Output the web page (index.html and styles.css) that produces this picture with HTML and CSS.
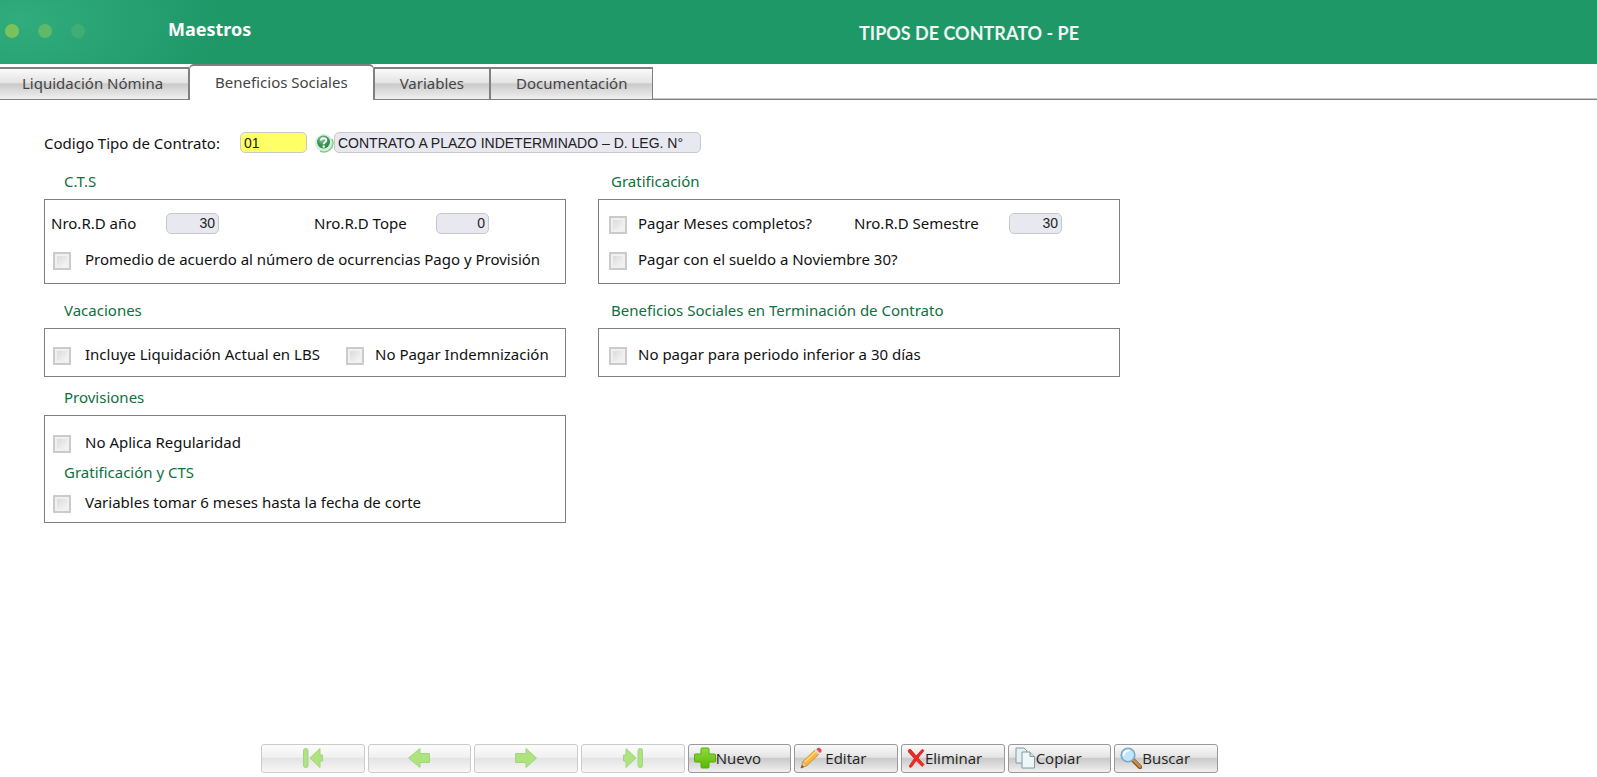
FILE: index.html
```html
<!DOCTYPE html>
<html lang="es">
<head>
  <meta charset="UTF-8">
  <meta name="viewport" content="width=device-width, initial-scale=1.0">
  <title>Tipos de Contrato - PE</title>
  <link rel="stylesheet" href="styles.css">
</head>
<body>

  <header class="header">
    <span class="dots"><i class="dot"></i><i class="dot"></i><i class="dot"></i></span>
    <span class="module">Maestros</span>
    <h1 class="title">TIPOS DE CONTRATO - PE</h1>
  </header>

  <!-- Tabs -->
  <nav class="tabs">
    <button type="button" class="tab tab-first">Liquidación Nómina</button>
    <button type="button" class="tab active">Beneficios Sociales</button>
    <button type="button" class="tab">Variables</button>
    <button type="button" class="tab">Documentación</button>
  </nav>

  <main class="content">
    <div class="code-row">
      <label class="code-label" for="codigo">Codigo Tipo de Contrato:</label>
      <input type="text" id="codigo" class="field field-key" value="01">
      <button type="button" class="help" aria-label="Ayuda">
        <svg width="20" height="20" viewBox="0 0 20 20">
          <defs>
            <radialGradient id="ball" cx="0.4" cy="0.3" r="0.8">
              <stop offset="0" stop-color="#8fc99d"/>
              <stop offset="0.5" stop-color="#3d9658"/>
              <stop offset="1" stop-color="#2c7d46"/>
            </radialGradient>
          </defs>
          <circle cx="10" cy="10" r="9" fill="#d5efda"/>
          <path d="M18 6a9 9 0 0 1-12 12" fill="none" stroke="#7fce8e" stroke-width="1.5"/>
          <circle cx="9.500" cy="9" r="6.500" fill="url(#ball)"/>
          <path d="M7 7.500c.3-3.200 5.500-3 5.300 0-.1 1.800-2.600 1.900-2.600 3.800" fill="none" stroke="#fff" stroke-width="2"/>
          <circle cx="9.700" cy="13.500" r="1.200" fill="#fff"/>
        </svg>
      </button>
      <input type="text" class="field field-name" aria-label="Nombre" value="CONTRATO A PLAZO INDETERMINADO – D. LEG. N°" readonly>
    </div>

    <div class="groups">
      <!-- Left column -->
      <div class="column">
        <section class="group">
          <h2>C.T.S</h2>
          <div class="box">
            <div class="row">
              <label class="label-year" for="rd-anio">Nro.R.D año</label>
              <input type="text" id="rd-anio" class="field field-num" value="30" readonly>
              <label class="label-top" for="rd-tope">Nro.R.D Tope</label>
              <input type="text" id="rd-tope" class="field field-num" value="0" readonly>
            </div>
            <div class="row">
              <label class="check"><input type="checkbox">Promedio de acuerdo al número de ocurrencias Pago y Provisión</label>
            </div>
          </div>
        </section>

        <section class="group group-tight">
          <h2>Vacaciones</h2>
          <div class="box box-single">
            <div class="row">
              <label class="check check-lbs"><input type="checkbox">Incluye Liquidación Actual en LBS</label>
              <label class="check check-near"><input type="checkbox">No Pagar Indemnización</label>
            </div>
          </div>
        </section>

        <section class="group">
          <h2>Provisiones</h2>
          <div class="box box-provisions">
            <div class="row">
              <label class="check"><input type="checkbox">No Aplica Regularidad</label>
            </div>
            <h3>Gratificación y CTS</h3>
            <div class="row">
              <label class="check"><input type="checkbox">Variables tomar 6 meses hasta la fecha de corte</label>
            </div>
          </div>
        </section>
      </div>

      <!-- Right column -->
      <div class="column column-right">
        <section class="group">
          <h2>Gratificación</h2>
          <div class="box">
            <div class="row">
              <label class="check check-months"><input type="checkbox">Pagar Meses completos?</label>
              <label class="label-semester" for="rd-semestre">Nro.R.D Semestre</label>
              <input type="text" id="rd-semestre" class="field field-num" value="30" readonly>
            </div>
            <div class="row">
              <label class="check"><input type="checkbox">Pagar con el sueldo a Noviembre 30?</label>
            </div>
          </div>
        </section>

        <section class="group">
          <h2>Beneficios Sociales en Terminación de Contrato</h2>
          <div class="box box-single">
            <div class="row">
              <label class="check"><input type="checkbox">No pagar para periodo inferior a 30 días</label>
            </div>
          </div>
        </section>
      </div>
    </div>
  </main>

  <!-- Record toolbar -->
  <footer class="toolbar">
    <button type="button" class="tool nav" aria-label="Primero" disabled>
      <svg width="22" height="22" viewBox="0 0 22 22">
        <rect x="1.500" y="1.500" width="4.500" height="19" rx="2" fill="#62c800" stroke="#45ac10"/>
        <path d="M8 11 18 1.500V8h2.500v6H18v6.500z" fill="#62c800" stroke="#45ac10"/>
      </svg>
    </button>
    <button type="button" class="tool nav" aria-label="Anterior" disabled>
      <svg width="22" height="22" viewBox="0 0 22 22">
        <path d="M.5 11 12 1.500V6.500h9.500v9H12v5z" fill="#62c800" stroke="#45ac10"/>
      </svg>
    </button>
    <button type="button" class="tool nav" aria-label="Siguiente" disabled>
      <svg width="22" height="22" viewBox="0 0 22 22">
        <path d="M21.500 11 11 1.500V6.500H.5v9H11v5z" fill="#62c800" stroke="#45ac10"/>
      </svg>
    </button>
    <button type="button" class="tool nav" aria-label="Último" disabled>
      <svg width="22" height="22" viewBox="0 0 22 22">
        <path d="M14 11 4 1.500V8H1.500v6H4v6.500z" fill="#62c800" stroke="#45ac10"/>
        <rect x="16" y="1.500" width="4.500" height="19" rx="2" fill="#62c800" stroke="#45ac10"/>
      </svg>
    </button>
    <button type="button" class="tool">
      <svg width="22" height="22" viewBox="0 0 22 22">
        <defs>
          <linearGradient id="plus" x1="0" y1="0" x2="0" y2="1">
            <stop offset="0" stop-color="#8fdc3c"/>
            <stop offset="1" stop-color="#5cb606"/>
          </linearGradient>
        </defs>
        <path d="M8 1h6q1 0 1 1v5h5.500q1 0 1 1v6q0 1-1 1H15v5q0 1-1 1H8q-1 0-1-1v-5H1.500q-1 0-1-1V8q0-1 1-1H7V2q0-1 1-1z" fill="url(#plus)" stroke="#55ad10"/>
      </svg>Nuevo
    </button>
    <button type="button" class="tool tool-edit">
      <svg width="22" height="22" viewBox="0 0 22 22">
        <path d="M1 21 3 14.500 15 3l4 4L7 18.500z" fill="#f8b840" stroke="#d98e25"/>
        <path d="M4.500 15 16.500 4" stroke="#ffdc82" stroke-width="1.500"/>
        <path d="M1 21l2-6.500L7 18.500z" fill="#e9c79b" stroke="#b98556" stroke-width=".6"/>
        <path d="M1 21l1-3 2 2z" fill="#5d4a3a"/>
        <path d="M14.500 3.500l2-2 4 4-2 2z" fill="#dcdfe2"/>
        <path d="M17 1.500q2-1.500 3.700.3t.3 3.500l-1 .7-3.500-3.500z" fill="#e0484c"/>
      </svg>Editar
    </button>
    <button type="button" class="tool">
      <svg width="18" height="22" viewBox="0 0 18 22">
        <path d="M1.500 3q2-2 3.500 1l4.200 5L15 2.500l2 1L11 11l6 6.500-1.800 2L9.200 13.500 4.500 20q-2.200 1-2.200-1L7.300 11.500 1.500 5z" fill="#ee2a24" stroke="#d91d1d" stroke-width=".8"/>
      </svg>Eliminar
    </button>
    <button type="button" class="tool">
      <svg width="22" height="22" viewBox="0 0 22 22">
        <path d="M2 1h8l3 3v12H2z" fill="#e6f0f2" stroke="#7f9ca3"/>
        <path d="M8 5h8l4.500 4.500V21H8z" fill="#eef6f7" stroke="#7f9ca3"/>
        <path d="M16 5v4.500h4.500" fill="#cbdfe3" stroke="#7f9ca3"/>
      </svg>Copiar
    </button>
    <button type="button" class="tool">
      <svg width="22" height="22" viewBox="0 0 22 22">
        <path d="m14 14 6 6" stroke="#7c5431" stroke-width="4.500" stroke-linecap="round"/>
        <path d="m14 13.500 6 6" stroke="#d58a3e" stroke-width="2.500" stroke-linecap="round"/>
        <circle cx="8" cy="8" r="6.800" fill="#bfe6fa" stroke="#7ca6c6" stroke-width="1.600"/>
        <path d="M4 8q0-4 4.500-4.500" fill="none" stroke="#fff" stroke-width="2" stroke-linecap="round"/>
      </svg>Buscar
    </button>
  </footer>

</body>
</html>
```

FILE: styles.css
```css
* {
  box-sizing: border-box;
}

body {
  margin: 0;
  min-height: 100vh;
  display: flex;
  flex-direction: column;
  background-color: #fff;
  color: #111;
  font-family: "Noto Sans", sans-serif;
  font-size: 15px;
  line-height: 20px;
}

button, input {
  font: inherit;
  color: inherit;
  margin: 0;
}

/* Green header */
.header {
  display: flex;
  align-items: center;
  height: 64px;
  padding-left: 5px;
  background: radial-gradient(ellipse 200px 110px at 20px 20px, #31ac7d, #1f9868) #1f9868;
  color: #fff;
}

.dots {
  display: flex;
  gap: 19px;
  width: 163px;
  margin-bottom: 3px;
}

.dot {
  width: 14px;
  height: 14px;
  border-radius: 50%;
  background-color: #7cc25a;
}

.dot:nth-child(2) {
  background-color: #5dba68;
}

.dot:nth-child(3) {
  background-color: #3fae74;
}

.module {
  width: 691px;
  margin-bottom: 6px;
  font-size: 18px;
  font-weight: bold;
}

.title {
  margin: 2px 0 0;
  font-family: Lato, sans-serif;
  font-size: 18px;
  color: #f1f5f3;
}

/* Tabs */
.tabs {
  display: flex;
  align-items: flex-end;
  height: 36px;
  box-shadow: inset 0 -1px #808080, inset 0 -2px #c8c8c8;
}

.tab {
  height: 33px;
  padding: 0 25px 3px;
  border: 1px solid #808080;
  border-top-width: 2px;
  background: linear-gradient(#fafafa, #e4e4e4 45%, #cacaca 50%, #f0f0f0);
  color: #444;
}

.tab-first {
  padding-left: 22px;
  border-left: 0;
}

.tab.active {
  height: 36px;
  border-bottom: 0;
  border-radius: 5px 5px 0 0;
  background: #fff;
}

/* Form */
.content {
  padding: 32px 44px 0;
}

.code-row {
  display: flex;
  align-items: center;
  height: 21px;
  margin-bottom: 18px;
}

.code-label {
  width: 196px;
}

.field {
  height: 21px;
  padding: 0 3px;
  border: 1px solid #c8c8cc;
  border-radius: 5px;
  background-color: #e8e8f1;
  font-family: "Liberation Sans", Arial, sans-serif;
  font-size: 14px;
  color: #222;
}

.field-key {
  width: 67px;
  background-color: #ffff66;
}

.field-name {
  width: 367px;
}

.field-num {
  width: 53px;
  text-align: right;
}

.help {
  display: flex;
  margin-left: 7px;
  padding: 0;
  border: 0;
  background: none;
}

.groups {
  display: grid;
  grid-template-columns: repeat(2, minmax(0, 522px));
  gap: 32px;
}

.group {
  margin-bottom: 16px;
}

.group-tight {
  margin-bottom: 10px;
}

h2, h3 {
  margin: 0;
  font-size: 15px;
  font-weight: normal;
  color: #0f7040;
}

h2 {
  padding: 0 0 8px 20px;
}

.column-right h2 {
  padding-left: 13px;
}

h3 {
  padding: 2px 0 2px 13px;
}

.box {
  padding: 5px 6px 6px;
  border: 1px solid #808080;
}

.box-single {
  padding-top: 7px;
  padding-bottom: 4px;
}

.box-provisions {
  padding-top: 8px;
  padding-bottom: 2px;
}

.column-right .box {
  padding-left: 8px;
}

.row {
  display: flex;
  align-items: center;
  height: 36px;
  white-space: nowrap;
}

.check {
  display: flex;
  align-items: center;
}

.check input {
  appearance: none;
  width: 18px;
  height: 18px;
  margin: 3px 14px 0 2px;
  border: 2px solid #cbcbcb;
  background: linear-gradient(135deg, #d6d6d6, #fafafa);
  box-shadow: inset 0 0 0 2px #f0f0f0;
}

.column-right .check input {
  margin-right: 11px;
}

.check-near input {
  margin-right: 11px;
}

.check-lbs {
  width: 293px;
}

.label-year {
  width: 115px;
}

.label-top {
  width: 122px;
  margin-left: 95px;
}

.check-months {
  width: 247px;
}

.label-semester {
  width: 155px;
}

/* Toolbar */
.toolbar {
  display: grid;
  grid-template-columns: repeat(9, 1fr);
  gap: 3px;
  max-width: 1218px;
  margin-top: auto;
  padding: 0 0 4px 261px;
}

.tool {
  display: flex;
  align-items: center;
  height: 29px;
  padding: 0 5px 1px;
  border: 1px solid #999;
  border-radius: 3px;
  background: linear-gradient(#fafafa, #e4e4e4 45%, #cacaca 50%, #f0f0f0);
  font-family: "Open Sans", sans-serif;
  color: #222;
}

.nav {
  justify-content: center;
  opacity: 0.5;
}

.tool-edit {
  gap: 3px;
}
```
